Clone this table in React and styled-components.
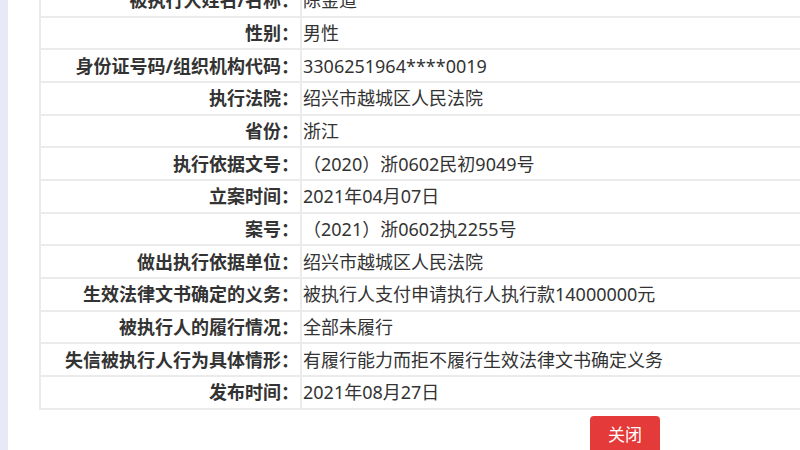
import React from "react";
import styled, { createGlobalStyle } from "styled-components";

const Global = createGlobalStyle`
  html, body { margin: 0; padding: 0; background: #fff; overflow: hidden; }
  body { font-family: "Noto Sans", "Noto Sans CJK SC", sans-serif; color: #333; }
`;

const Page = styled.div`
  display: flex;
  width: 800px;
  height: 450px;
  overflow: hidden;
`;

const SideStrip = styled.div`
  flex: 0 0 8px;
  background: #e7e9f6;
`;

const Main = styled.div`
  flex: 1;
  padding-left: 31px;
  margin-top: -17px;
  display: flex;
  flex-direction: column;
  min-width: 0;
`;

const Table = styled.table`
  border-collapse: collapse;
  width: 1000px;
  table-layout: fixed;
  border: 2px solid #ebebeb;
`;

const Row = styled.tr``;

const Label = styled.td`
  width: 258px;
  height: 30.67px;
  padding: 0 1px 0 0;
  border: 2px solid #ebebeb;
  text-align: right;
  font-family: "Noto Sans", "Noto Sans CJK SC", sans-serif;
  font-weight: 700;
  font-size: 18px;
  line-height: 24px;
  color: #333;
  white-space: nowrap;
`;

const Value = styled.td`
  padding: 0 0 0 1px;
  border: 2px solid #ebebeb;
  font-family: "Noto Sans", "Noto Sans CJK SC", sans-serif;
  font-size: 18px;
  line-height: 24px;
  color: #333;
  white-space: nowrap;
`;

const ButtonRow = styled.div`
  padding: 6px 0 0 551px;
`;

const CloseButton = styled.button`
  width: 70px;
  height: 40px;
  border: none;
  border-radius: 4px;
  background: #e53a3a;
  color: #fff;
  font-family: "Noto Sans CJK SC", sans-serif;
  font-size: 17px;
  padding: 0 0 4px;
`;

const rows = [
  ["被执行人姓名/名称：", "陈金道"],
  ["性别：", "男性"],
  ["身份证号码/组织机构代码：", "3306251964****0019"],
  ["执行法院：", "绍兴市越城区人民法院"],
  ["省份：", "浙江"],
  ["执行依据文号：", "（2020）浙0602民初9049号"],
  ["立案时间：", "2021年04月07日"],
  ["案号：", "（2021）浙0602执2255号"],
  ["做出执行依据单位：", "绍兴市越城区人民法院"],
  ["生效法律文书确定的义务：", "被执行人支付申请执行人执行款14000000元"],
  ["被执行人的履行情况：", "全部未履行"],
  ["失信被执行人行为具体情形：", "有履行能力而拒不履行生效法律文书确定义务"],
  ["发布时间：", "2021年08月27日"],
];

export default function App() {
  return (
    <>
      <Global />
      <Page>
        <SideStrip />
        <Main>
          <Table>
            <tbody>
              {rows.map(([l, v]) => (
                <Row key={l}>
                  <Label>{l}</Label>
                  <Value>{v}</Value>
                </Row>
              ))}
            </tbody>
          </Table>
          <ButtonRow>
            <CloseButton>关闭</CloseButton>
          </ButtonRow>
        </Main>
      </Page>
    </>
  );
}
